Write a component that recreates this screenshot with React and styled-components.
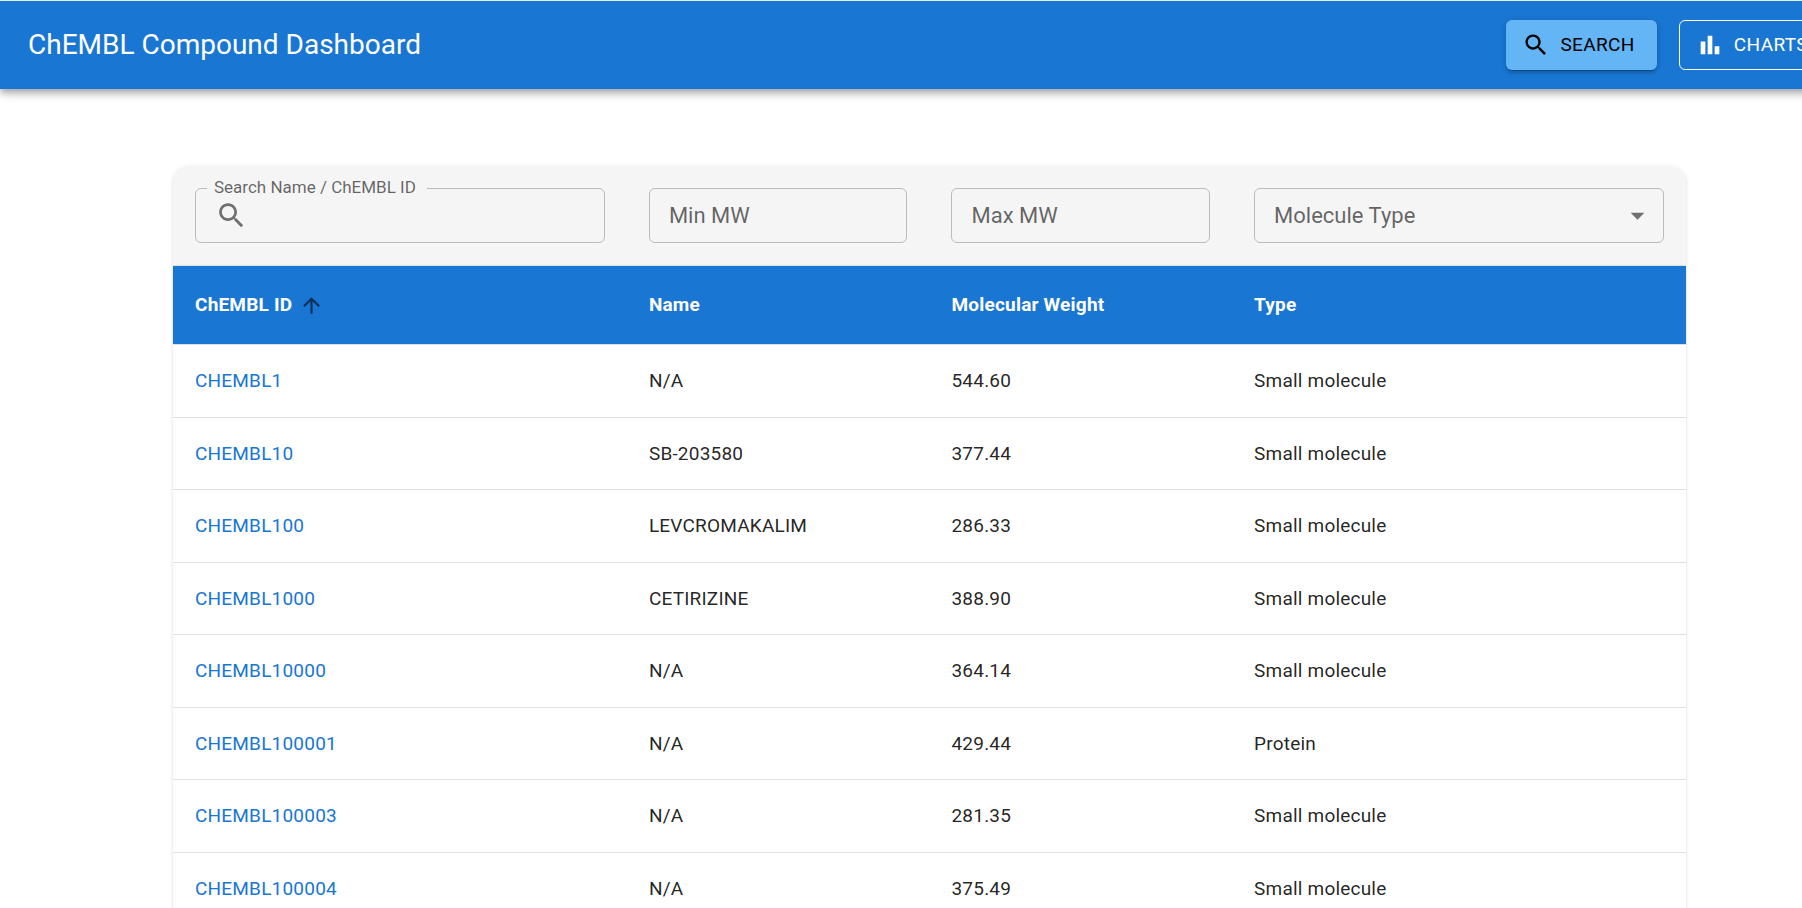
import React from "react";
import styled, { createGlobalStyle } from "styled-components";

const GlobalStyle = createGlobalStyle`
  *, *::before, *::after { box-sizing: border-box; }
  body {
    margin: 0;
    background: #fff;
    color: rgba(0, 0, 0, 0.87);
    font-family: Roboto, "Liberation Sans", sans-serif;
    overflow-x: hidden;
  }
`;

const Page = styled.div`
  width: calc(100% + 57px);
`;

const AppBar = styled.header`
  display: flex;
  align-items: center;
  justify-content: space-between;
  height: 89px;
  padding: 0 28px;
  border-top: 1px solid #e3f0ee;
  background: #1976d2;
  color: #fff;
  box-shadow:
    0 3px 6px -1px rgba(0, 0, 0, 0.2),
    0 6px 7px 0 rgba(0, 0, 0, 0.14),
    0 1px 14px 0 rgba(0, 0, 0, 0.12);
`;

const Title = styled.h1`
  margin: 0;
  font-size: 28px;
  font-weight: 400;
  line-height: 44px;
`;

const Nav = styled.nav`
  display: flex;
  gap: 22px;
`;

const NavButton = styled.button`
  display: flex;
  align-items: center;
  gap: 10px;
  height: 50px;
  padding: 0 22px 0 16px;
  border: ${(p) => (p.$active ? "0" : "1px solid #fff")};
  border-radius: 6px;
  background: ${(p) => (p.$active ? "#64b5f6" : "transparent")};
  color: ${(p) => (p.$active ? "#000" : "#fff")};
  box-shadow: ${(p) =>
    p.$active
      ? "0 4px 1px -3px rgba(0,0,0,.2), 0 3px 3px 0 rgba(0,0,0,.14), 0 1px 7px 0 rgba(0,0,0,.12)"
      : "none"};
  font-family: inherit;
  font-size: 19px;
  line-height: 34px;
  letter-spacing: 0.02em;
  text-transform: uppercase;
  cursor: pointer;
`;

const Icon = styled.svg`
  flex: none;
  width: ${(p) => p.$size}px;
  height: ${(p) => p.$size}px;
  fill: currentColor;
`;

const Main = styled.main`
  max-width: 1513px;
  margin: 77px auto 44px;
`;

const Card = styled.section`
  overflow: hidden;
  border-radius: 16px;
  background: #fff;
  box-shadow:
    0 3px 1px -1px rgba(0, 0, 0, 0.2),
    0 1px 1px 0 rgba(0, 0, 0, 0.14),
    0 1px 4px 0 rgba(0, 0, 0, 0.12);
`;

const Table = styled.table`
  width: 100%;
  table-layout: fixed;
  border-collapse: separate;
  border-spacing: 0;
  font-size: 19px;
  line-height: 28px;
  letter-spacing: 0.01071em;
`;

const Column = styled.col`
  width: ${(p) => p.$width};
`;

const FilterCell = styled.td`
  height: 100px;
  padding: 22px;
  border-bottom: 1px solid #e0e0e0;
  background: #f5f5f5;
  vertical-align: top;
`;

const HeadCell = styled.th`
  height: 79px;
  padding: 0 22px;
  border-bottom: 1px solid #e0e0e0;
  background: #1976d2;
  color: #fff;
  font-weight: 700;
  text-align: left;
`;

const SortButton = styled.button`
  display: flex;
  align-items: center;
  gap: 7px;
  padding: 0;
  border: 0;
  background: none;
  color: inherit;
  font: inherit;
  letter-spacing: inherit;
  cursor: pointer;
`;

const SortIcon = styled(Icon)`
  color: rgba(0, 0, 0, 0.6);
`;

const Row = styled.tr`
  height: 73px;
  &:nth-child(even) {
    height: 72px;
  }
`;

const Cell = styled.td`
  padding: 0 22px;
  border-bottom: 1px solid #e0e0e0;
`;

const CompoundLink = styled.a`
  color: #1976d2;
  text-decoration: none;
`;

const Field = styled.div`
  position: relative;
  display: flex;
  align-items: center;
  gap: 11px;
  height: 55px;
  padding: 0 ${(p) => (p.$select ? "9px" : "19px")} 0 19px;
  border: 1px solid #bbb;
  border-radius: 6px;
  color: rgba(0, 0, 0, 0.54);
`;

const FloatingLabel = styled.label`
  position: absolute;
  top: -13px;
  left: 11px;
  padding: 0 11px 0 7px;
  background: #f5f5f5;
  color: rgba(0, 0, 0, 0.6);
  font-size: 17px;
  line-height: 22px;
  letter-spacing: normal;
`;

const TextInput = styled.input`
  flex: 1;
  min-width: 0;
  height: 32px;
  padding: 0;
  border: 0;
  outline: 0;
  background: none;
  color: rgba(0, 0, 0, 0.87);
  font-family: inherit;
  font-size: 22px;
  &::placeholder {
    color: rgba(0, 0, 0, 0.6);
    opacity: 1;
  }
`;

const Select = styled.select`
  flex: 1;
  min-width: 0;
  height: 32px;
  padding: 0;
  border: 0;
  outline: 0;
  appearance: none;
  background: none;
  color: rgba(0, 0, 0, 0.6);
  font-family: inherit;
  font-size: 22px;
`;

const SEARCH =
  "M15.5 14h-.79l-.28-.27C15.41 12.59 16 11.11 16 9.5 16 5.91 13.09 3 9.5 3S3 5.91 3 9.5 5.91 16 9.5 16c1.61 0 3.09-.59 4.23-1.57l.27.28v.79l5 4.99L20.49 19zm-6 0C7.01 14 5 11.99 5 9.5S7.01 5 9.5 5 14 7.01 14 9.5 11.99 14 9.5 14";
const BARS = "M4 9h4v11H4zm12 4h4v7h-4zm-6-9h4v16h-4z";
const ARROW_UP = "m4 12 1.41 1.41L11 7.83V20h2V7.83l5.58 5.59L20 12l-8-8z";
const CARET = "m7 10 5 5 5-5z";

const compounds = [
  ["CHEMBL1", "N/A", "544.60", "Small molecule"],
  ["CHEMBL10", "SB-203580", "377.44", "Small molecule"],
  ["CHEMBL100", "LEVCROMAKALIM", "286.33", "Small molecule"],
  ["CHEMBL1000", "CETIRIZINE", "388.90", "Small molecule"],
  ["CHEMBL10000", "N/A", "364.14", "Small molecule"],
  ["CHEMBL100001", "N/A", "429.44", "Protein"],
  ["CHEMBL100003", "N/A", "281.35", "Small molecule"],
  ["CHEMBL100004", "N/A", "375.49", "Small molecule"],
];

function Glyph({ path, size, as: Component = Icon }) {
  return (
    <Component $size={size} viewBox="0 0 24 24" aria-hidden="true">
      <path d={path} />
    </Component>
  );
}

export default function App() {
  return (
    <>
      <GlobalStyle />
      <Page>
        <AppBar>
          <Title>ChEMBL Compound Dashboard</Title>
          <Nav>
            <NavButton type="button" $active>
              <Glyph path={SEARCH} size={28} />
              Search
            </NavButton>
            <NavButton type="button">
              <Glyph path={BARS} size={28} />
              Charts
            </NavButton>
          </Nav>
        </AppBar>
        <Main>
          <Card>
            <Table>
              <colgroup>
                <Column $width="30%" />
                <Column $width="20%" />
                <Column $width="20%" />
                <Column $width="30%" />
              </colgroup>
              <thead>
                <tr>
                  <FilterCell>
                    <Field>
                      <FloatingLabel htmlFor="query">Search Name / ChEMBL ID</FloatingLabel>
                      <Glyph path={SEARCH} size={33} />
                      <TextInput id="query" type="text" />
                    </Field>
                  </FilterCell>
                  <FilterCell>
                    <Field>
                      <TextInput type="text" inputMode="decimal" placeholder="Min MW" aria-label="Min MW" />
                    </Field>
                  </FilterCell>
                  <FilterCell>
                    <Field>
                      <TextInput type="text" inputMode="decimal" placeholder="Max MW" aria-label="Max MW" />
                    </Field>
                  </FilterCell>
                  <FilterCell>
                    <Field $select>
                      <Select aria-label="Molecule Type" defaultValue="">
                        <option value="">Molecule Type</option>
                        <option>Small molecule</option>
                        <option>Protein</option>
                      </Select>
                      <Glyph path={CARET} size={33} />
                    </Field>
                  </FilterCell>
                </tr>
                <tr>
                  <HeadCell scope="col" aria-sort="ascending">
                    <SortButton type="button">
                      ChEMBL ID
                      <Glyph as={SortIcon} path={ARROW_UP} size={25} />
                    </SortButton>
                  </HeadCell>
                  <HeadCell scope="col">Name</HeadCell>
                  <HeadCell scope="col">Molecular Weight</HeadCell>
                  <HeadCell scope="col">Type</HeadCell>
                </tr>
              </thead>
              <tbody>
                {compounds.map(([id, name, weight, type]) => (
                  <Row key={id}>
                    <Cell>
                      <CompoundLink href={`#${id}`}>{id}</CompoundLink>
                    </Cell>
                    <Cell>{name}</Cell>
                    <Cell>{weight}</Cell>
                    <Cell>{type}</Cell>
                  </Row>
                ))}
              </tbody>
            </Table>
          </Card>
        </Main>
      </Page>
    </>
  );
}
